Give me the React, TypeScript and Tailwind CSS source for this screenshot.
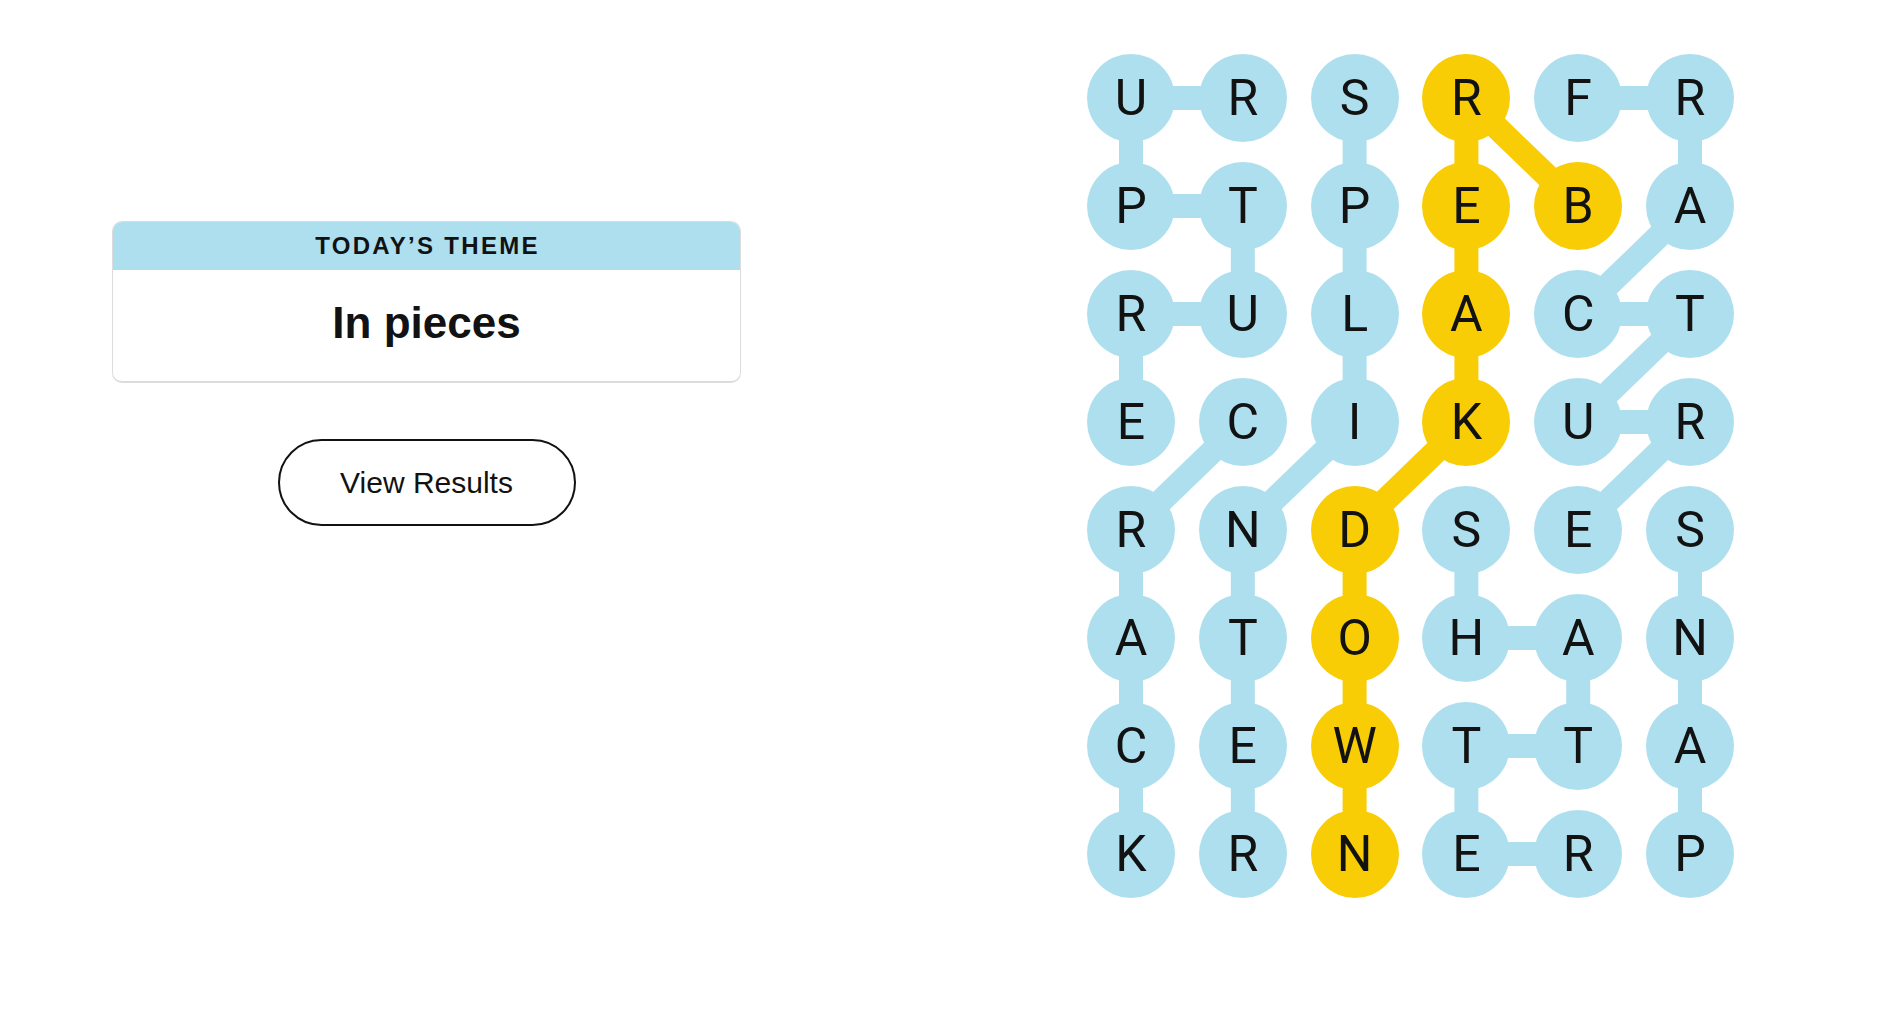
import React from "react";

const GRID = [
  "URSRFR",
  "PTPEBA",
  "RULACT",
  "ECIKUR",
  "RNDSES",
  "ATOHAN",
  "CEWTTA",
  "KRNERP",
];

const YELLOW = new Set(["0,3", "1,3", "1,4", "2,3", "3,3", "4,2", "5,2", "6,2", "7,2"]);

type E = [number, number, number, number];

const BLUE_EDGES: E[] = [
  [0, 0, 0, 1], [0, 0, 1, 0], [1, 0, 1, 1], [1, 1, 2, 1], [2, 1, 2, 0], [2, 0, 3, 0],
  [3, 1, 4, 0], [4, 0, 5, 0], [5, 0, 6, 0], [6, 0, 7, 0],
  [0, 2, 1, 2], [1, 2, 2, 2], [2, 2, 3, 2], [3, 2, 4, 1], [4, 1, 5, 1], [5, 1, 6, 1], [6, 1, 7, 1],
  [0, 4, 0, 5], [0, 5, 1, 5], [1, 5, 2, 4], [2, 4, 2, 5], [2, 5, 3, 4], [3, 4, 3, 5], [3, 5, 4, 4],
  [4, 5, 5, 5], [5, 5, 6, 5], [6, 5, 7, 5],
  [4, 3, 5, 3], [5, 3, 5, 4], [5, 4, 6, 4], [6, 4, 6, 3], [6, 3, 7, 3], [7, 3, 7, 4],
];

const YELLOW_EDGES: E[] = [
  [0, 3, 1, 4], [0, 3, 1, 3], [1, 3, 2, 3], [2, 3, 3, 3], [3, 3, 4, 2], [4, 2, 5, 2], [5, 2, 6, 2], [6, 2, 7, 2],
];

const cx = (c: number) => 44 + 111.8 * c;
const cy = (r: number) => 44 + 108 * r;

function Board() {
  return (
    <div className="relative grid grid-cols-[repeat(6,88px)] grid-rows-[repeat(8,88px)] gap-x-[23.8px] gap-y-[20px]">
      <svg className="absolute inset-0" width={647} height={844} viewBox="0 0 647 844">
        {BLUE_EDGES.map(([r1, c1, r2, c2], i) => (
          <line key={"b" + i} x1={cx(c1)} y1={cy(r1)} x2={cx(c2)} y2={cy(r2)} stroke="#aedfee" strokeWidth={24} />
        ))}
        {YELLOW_EDGES.map(([r1, c1, r2, c2], i) => (
          <line key={"y" + i} x1={cx(c1)} y1={cy(r1)} x2={cx(c2)} y2={cy(r2)} stroke="#f8cd05" strokeWidth={24} />
        ))}
      </svg>
      {GRID.flatMap((row, r) =>
        row.split("").map((ch, c) => (
          <div
            key={r + "-" + c}
            className={
              "relative flex items-center justify-center rounded-full w-[88px] h-[88px] text-[50px] leading-none text-[#121212] font-['Roboto',sans-serif] " +
              (YELLOW.has(r + "," + c) ? "bg-[#f8cd05]" : "bg-[#aedfee]")
            }
          >
            {ch}
          </div>
        ))
      )}
    </div>
  );
}

export default function App() {
  return (
    <div className="w-[1902px] h-[1020px] bg-white flex items-start pl-[112px] pt-[54px] font-['Liberation_Sans',Arial,sans-serif]">
      <div className="w-[629px] mt-[167px] flex flex-col items-center">
        <div className="w-full h-[162px] rounded-[10px] border border-[#dcdcdc] border-b-2 overflow-hidden flex flex-col">
          <div className="h-[48px] bg-[#aedfee] flex items-center justify-center pl-[2px] text-[24px] font-bold tracking-[2.3px] text-[#121212]">
            TODAY’S THEME
          </div>
          <div className="flex-1 flex items-center justify-center pb-[6px] text-[44px] font-bold text-[#121212]">
            In pieces
          </div>
        </div>
        <button className="mt-[56px] w-[298px] h-[87px] rounded-full border-2 border-[#121212] bg-white flex items-center justify-center text-[30px] text-[#121212]">
          View Results
        </button>
      </div>
      <div className="ml-[346px]">
        <Board />
      </div>
    </div>
  );
}
